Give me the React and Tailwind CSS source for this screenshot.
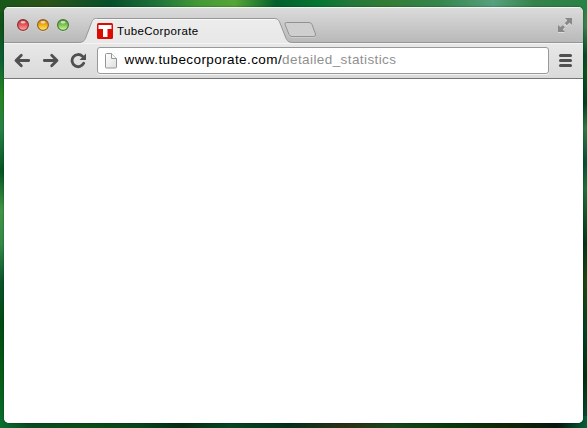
import React from "react";

const LIGHTS = [
  { id: "close", edge: "#8e2f31", top: "#a83d40", mid: "#e9555a", glow: "#ffb3ae" },
  { id: "minimize", edge: "#96601d", top: "#b8791a", mid: "#f3ae15", glow: "#fff07a" },
  { id: "zoom", edge: "#467a30", top: "#55903c", mid: "#7fc553", glow: "#d2ffa6" },
];

function Light({ id, edge, top, mid, glow }) {
  return (
    <svg className="block h-3.5 w-3.5" viewBox="0 0 14 14">
      <defs>
        <linearGradient id={id} x1="0" y1="0" x2="0" y2="1">
          <stop offset="0" stopColor={top} />
          <stop offset="0.5" stopColor={mid} />
          <stop offset="1" stopColor={glow} />
        </linearGradient>
      </defs>
      <circle cx="7" cy="7.8" r="5.8" fill="#fff" opacity="0.45" />
      <circle cx="7" cy="7" r="5.4" fill={`url(#${id})`} stroke={edge} strokeWidth="1.2" />
      <ellipse cx="7" cy="4.2" rx="2.5" ry="1.3" fill="#fff" opacity="0.65" />
    </svg>
  );
}

function Tab() {
  return (
    <div className="relative ml-[8px] flex h-[26px] w-[216px] items-center pl-[19px]">
      <svg className="absolute inset-0" width="216" height="26" viewBox="0 0 216 26">
        <defs>
          <linearGradient id="tab" x1="0" y1="0" x2="0" y2="1">
            <stop offset="0" stopColor="#ececec" />
            <stop offset="1" stopColor="#e8e8e8" />
          </linearGradient>
        </defs>
        <path d="M0 25.500C5 25.500 6.500 24 8 20L13.500 5.500C15 2 16 1.500 18.500 1.500H196C199.500 1.500 200.500 2.500 202 6L207.500 20C209 24 210.500 25.500 215 25.500V26H0Z" fill="url(#tab)" />
        <path d="M0 25.500C5 25.500 6.500 24 8 20L13.500 5.500C15 2 16 1.500 18.500 1.500H196C199.500 1.500 200.500 2.500 202 6L207.500 20C209 24 210.500 25.500 215 25.500" fill="none" stroke="#969696" />
        <path d="M17 2.500H197" stroke="#f8f8f8" />
      </svg>
      <svg className="relative mt-[2px] block" width="16" height="16" viewBox="0 0 16 16">
        <rect width="16" height="16" rx="1.500" fill="#dc0a00" />
        <path d="M1.500 2H14.500V6H10.500V14H6V6H1.500Z" fill="#fff" />
      </svg>
      <span className="relative ml-1 mt-[1px] whitespace-nowrap text-[11.5px] leading-[14px] tracking-[0.35px] text-black">TubeCorporate</span>
    </div>
  );
}

function TitleBar() {
  return (
    <div className="flex h-9 shrink-0 items-end border-b border-[#969696] bg-linear-to-b from-[#dcdcdc] to-[#b9b9b9] shadow-[inset_0_1px_0_#f4f4f4]">
      <div className="mb-[10px] ml-3 flex gap-1.5">
        {LIGHTS.map((light) => <Light key={light.id} {...light} />)}
      </div>
      <div className="-mb-px"><Tab /></div>
      <svg className="-ml-[11px] mb-[3px] block" width="34" height="18" viewBox="0 0 34 18">
        <path d="M3.500 2.500H26Q28 2.500 29 4.500L32.500 14Q33 16.500 31 16.500H9Q7 16.500 6 14.500L2 4.500Q1.500 2.500 3.500 2.500Z" fill="none" stroke="#eee" opacity="0.35" />
        <path d="M3.500 1.500H26Q28 1.500 29 3.500L32.500 13Q33 15.500 31 15.500H9Q7 15.500 6 13.500L2 3.500Q1.500 1.500 3.500 1.500Z" fill="#cfcfcf" stroke="#929292" />
      </svg>
      <svg className="mb-[9px] ml-auto mr-[11px] block" width="14" height="15" viewBox="0 0 14 15">
        <g transform="translate(0 1)" fill="#f1f1f1" opacity="0.55">
          <path d="M7 0H14V7L11.500 4.500L8.500 7.500L6.500 5.500L9.500 2.500ZM0 7L2.500 9.500L5 7L7 9L4.500 11.500L7 14H0Z" />
        </g>
        <path d="M7 0H14V7L11.500 4.800L8.800 7.300L6.800 5.300L9.300 2.500ZM0 7L2.500 9.300L4.800 7.200L6.800 9.200L4.700 11.500L7 14H0Z" fill="#888" />
      </svg>
    </div>
  );
}

function Toolbar() {
  return (
    <div className="flex h-9 shrink-0 items-center border-b border-[#777] bg-linear-to-b from-[#e8e8e8] to-[#dadada] pl-[10px] pr-[11px] shadow-[inset_0_1px_0_#f4f4f4]">
      <svg className="block" width="17" height="16" viewBox="0 0 17 16" fill="none" stroke="#505050" strokeWidth="2.800" strokeLinecap="round" strokeLinejoin="round">
        <path d="M3 7.500H14.700M7.300 2.300L2 7.500L7.300 12.700" />
      </svg>
      <svg className="ml-[11px] block" width="17" height="16" viewBox="0 0 17 16" fill="none" stroke="#505050" strokeWidth="2.800" strokeLinecap="round" strokeLinejoin="round">
        <path d="M2.300 7.500H14M9.700 2.300L15 7.500L9.700 12.700" />
      </svg>
      <svg className="ml-[11px] block" width="17" height="16" viewBox="0 0 17 16">
        <path d="M13.700 10.200A6.100 6.100 0 1 1 12.400 3.200" fill="none" stroke="#505050" strokeWidth="2.800" strokeLinecap="round" />
        <path d="M16 0.500V7H9.500Z" fill="#505050" />
      </svg>
      <div className="ml-[10px] flex h-[27px] w-[452px] items-center rounded-[3px] border border-[#999] bg-white pl-[7px] shadow-[0_1px_0_#f3f3f3]">
        <svg className="mt-px block" width="12" height="16" viewBox="0 0 12 16">
          <defs>
            <linearGradient id="page" x1="0" y1="0" x2="1" y2="1">
              <stop offset="0" stopColor="#fff" />
              <stop offset="1" stopColor="#dedede" />
            </linearGradient>
          </defs>
          <path d="M1.500 0.500H6.500L11.500 5.500V14Q11.500 15 10.500 15H1.500Q0.500 15 0.500 14V1.500Q0.500 0.500 1.500 0.500Z" fill="url(#page)" stroke="#959595" />
          <path d="M6.500 0.500V5.500H11.500" fill="#f8f8f8" stroke="#959595" />
        </svg>
        <span className="-mt-[2px] ml-[7.5px] whitespace-nowrap text-[13.5px] leading-4 tracking-[0.41px] text-black">www.tubecorporate.com/<span className="text-[#909090]">detailed_statistics</span></span>
      </div>
      <div className="ml-auto flex w-[13px] flex-col gap-[2px]">
        <div className="h-[3px] rounded-full bg-[#505050]" />
        <div className="h-[3px] rounded-full bg-[#505050]" />
        <div className="h-[3px] rounded-full bg-[#505050]" />
      </div>
    </div>
  );
}

const BACKDROP = [
  "bg-no-repeat bg-[#064c25]",
  "bg-[image:linear-gradient(90deg,#175819_0%,#2c5218_8%,#07502b_19%,#1f753a_27%,#459a35_34%,#56a537_40%,#04602d_47%,#057531_54%,#24783a_60%,#327c35_66%,#34864d_75%,#56a17e_84%,#35834b_91%,#278344_100%),linear-gradient(90deg,#08702f_0%,#0a4922_5%,#0a4d14_14%,#06431c_24%,#072b12_31%,#034622_39%,#04301b_49%,#2c3015_59%,#16451b_67%,#083809_77%,#102507_87%,#04190f_95%,#046038_100%),linear-gradient(180deg,#175819_0%,#0f5219_6%,#0b5f37_14%,#27851f_22%,#278347_30%,#065523_40%,#429546_49%,#348a47_57%,#095429_66%,#004d12_76%,#075d16_88%,#08702f_100%),linear-gradient(180deg,#278344_0%,#37824c_6%,#064a28_13%,#06551e_17%,#003f20_24%,#327845_30%,#055036_38%,#1f703b_44%,#043616_57%,#1b4711_66%,#034022_78%,#02300c_88%,#045034_100%)]",
  "bg-[size:587px_12px,587px_12px,10px_428px,10px_428px]",
  "bg-[position:left_top,left_bottom,left_top,right_top]",
].join(" ");

export default function App() {
  return (
    <div className={`h-[428px] w-[587px] overflow-hidden px-1 pb-[5px] pt-[7px] font-['Liberation_Sans',Arial,sans-serif] ${BACKDROP}`}>
      <div className="flex h-full flex-col overflow-hidden rounded-[5px] bg-white shadow-[0_0_2px_#00000080]">
        <TitleBar />
        <Toolbar />
        <main className="flex-1 bg-white" />
      </div>
    </div>
  );
}
